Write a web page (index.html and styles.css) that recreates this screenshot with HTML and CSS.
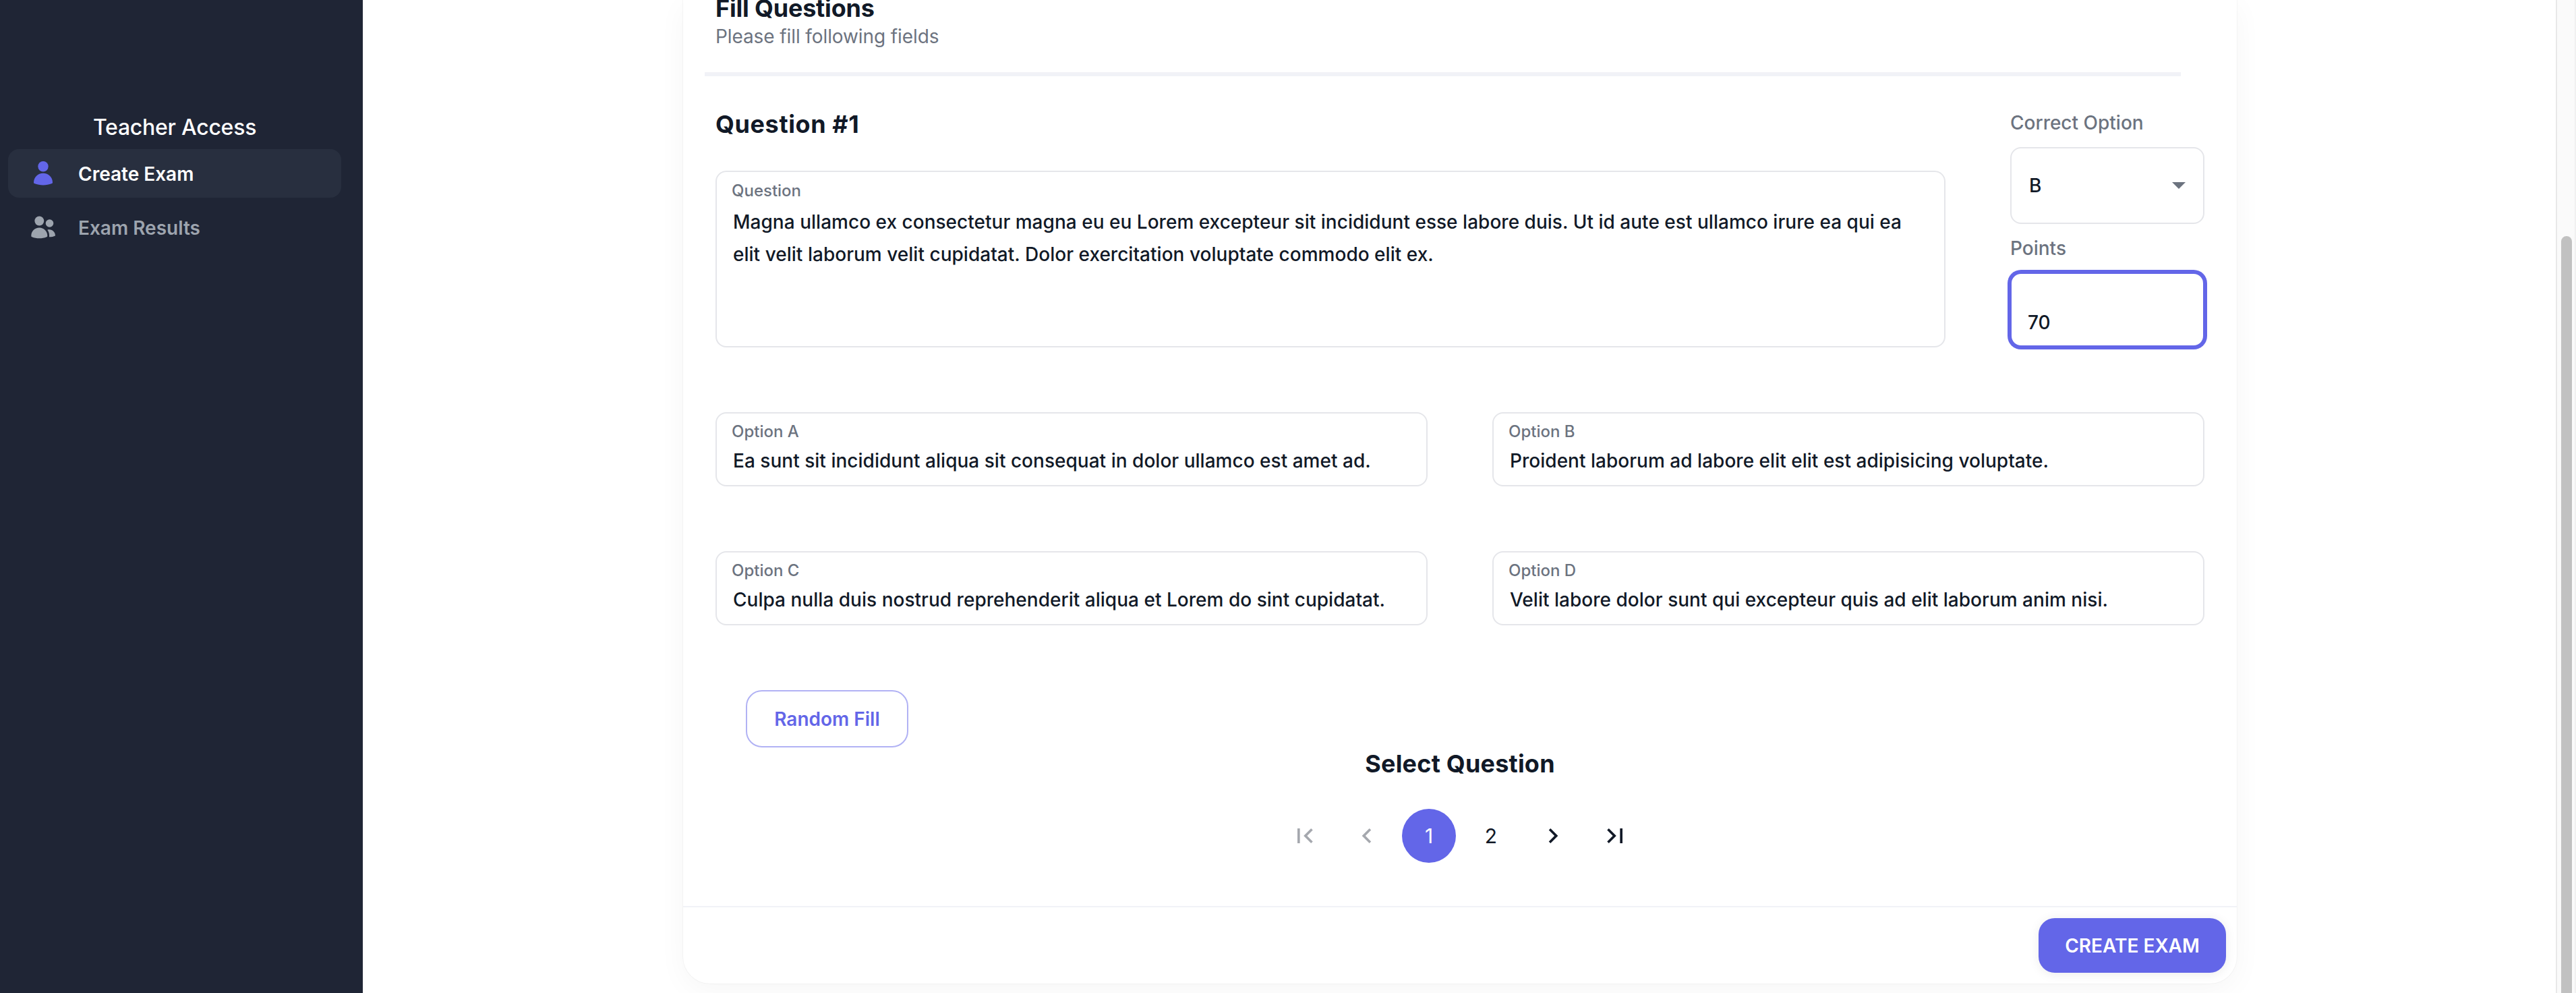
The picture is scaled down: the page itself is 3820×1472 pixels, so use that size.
FILE: index.html
```html
<!DOCTYPE html>
<html lang="en">
<head>
<meta charset="utf-8">
<title>Create Exam</title>
<link rel="stylesheet" href="styles.css">
</head>
<body>
<div class="app">
  <aside class="sidebar">
    <h2 class="sidebar-title">Teacher Access</h2>
    <nav class="nav">
      <a class="nav-item active">
        <svg class="nav-icon" viewBox="0 0 40 40" fill="currentColor"><ellipse cx="20" cy="9.8" rx="7.7" ry="7.8"/><path d="M6 33.6C6 25.7 12.3 19.8 20 19.8s14 5.900 14 13.800c0 .8-.4 1.200-1 1.500-8 3.300-18 3.300-26 0-.6-.3-1-.7-1-1.500Z"/></svg>
        <span class="nav-text">Create Exam</span>
      </a>
      <a class="nav-item">
        <svg class="nav-icon" viewBox="0 0 40 40" fill="currentColor"><circle cx="14.3" cy="10.5" r="6.9"/><circle cx="29.5" cy="14" r="5.8"/><path d="M2.300 32.400c0-6.600 5.300-11.900 12-11.900s12 5.300 12 11.900c0 .9-.3 1.500-1.100 1.900-6.500 2.700-15.300 2.700-21.800 0-.8-.4-1.100-1-1.100-1.900Z"/><path d="M29 34.300c.3-4.400-.4-7.500-2.700-10.500 6-1.900 11.700 2.700 11.700 8.600-2.600 1.300-5.500 1.900-9 1.900Z"/></svg>
        <span class="nav-text">Exam Results</span>
      </a>
    </nav>
  </aside>
  <main class="main">
    <section class="card">
      <header class="card-header">
        <h3 class="heading card-heading">Fill Questions</h3>
        <p class="subheading">Please fill following fields</p>
      </header>
      <hr class="rule">
      <div class="question-row">
        <div class="question-col">
          <h3 class="heading question-heading">Question #1</h3>
          <div class="field question-field">
            <span class="field-label">Question</span>
            <p class="field-text">Magna ullamco ex consectetur magna eu eu Lorem excepteur sit incididunt esse labore duis. Ut id aute est ullamco irure ea qui ea<br>elit velit laborum velit cupidatat. Dolor exercitation voluptate commodo elit ex.</p>
          </div>
        </div>
        <div class="side-col">
          <span class="side-label">Correct Option</span>
          <div class="field select">
            <span>B</span>
            <svg class="caret" viewBox="0 0 20 10"><path d="M0 0h20L10 10Z" fill="#6c737f"/></svg>
          </div>
          <span class="side-label points-label">Points</span>
          <div class="field points">70</div>
        </div>
      </div>
      <div class="options">
        <div class="field option"><span class="field-label">Option A</span><span class="field-text">Ea sunt sit incididunt aliqua sit consequat in dolor ullamco est amet ad.</span></div>
        <div class="field option"><span class="field-label">Option B</span><span class="field-text">Proident laborum ad labore elit elit est adipisicing voluptate.</span></div>
        <div class="field option"><span class="field-label">Option C</span><span class="field-text">Culpa nulla duis nostrud reprehenderit aliqua et Lorem do sint cupidatat.</span></div>
        <div class="field option"><span class="field-label">Option D</span><span class="field-text">Velit labore dolor sunt qui excepteur quis ad elit laborum anim nisi.</span></div>
      </div>
      <button class="btn btn-outline">Random Fill</button>
      <div class="pager">
        <h3 class="heading">Select Question</h3>
        <div class="pages">
          <span class="page disabled"><svg viewBox="0 0 24 24"><path d="M18.410 16.590 13.820 12l4.590-4.590L17 6l-6 6 6 6zM6 6h2v12H6z"/></svg></span>
          <span class="page disabled"><svg viewBox="0 0 24 24"><path d="M15.410 7.410 14 6l-6 6 6 6 1.410-1.410L10.830 12z"/></svg></span>
          <span class="page current">1</span>
          <span class="page">2</span>
          <span class="page"><svg viewBox="0 0 24 24"><path d="M10 6 8.590 7.410 13.170 12l-4.580 4.590L10 18l6-6z"/></svg></span>
          <span class="page"><svg viewBox="0 0 24 24"><path d="M5.590 7.410 10.180 12l-4.590 4.590L7 18l6-6-6-6zM16 6h2v12h-2z"/></svg></span>
        </div>
      </div>
      <footer class="card-footer">
        <button class="btn btn-primary">CREATE EXAM</button>
      </footer>
    </section>
  </main>
  <div class="scrollbar"><div class="thumb"></div></div>
</div>
</body>
</html>
```
FILE: styles.css
```css
* { box-sizing: border-box; margin: 0; }
body { font-family: Inter, "Liberation Sans", sans-serif; font-size: 28px; font-weight: 500; color: #111927; background: #fff; overflow: hidden; }
.app { display: flex; height: 1472px; overflow: hidden; }

.sidebar { width: 538px; flex: none; background: #1f2535; color: #fff; padding: 165px 32px 0 12px; }
.sidebar-title { font-size: 32px; font-weight: 500; line-height: 48px; letter-spacing: -.25px; text-align: center; }
.nav { display: flex; flex-direction: column; gap: 8px; margin-top: 8px; }
.nav-item { display: flex; align-items: center; gap: 32px; height: 72px; padding-left: 32px; border-radius: 16px; font-weight: 600; color: #9da4ae; white-space: nowrap; }
.nav-item.active { background: #282f3f; color: #fff; }
.nav-icon { width: 40px; height: 40px; }
.nav-text { padding-top: 2px; }
.active .nav-icon { color: #6366e8; }

.main { flex: 1; padding-left: 475px; }
.card { width: 2304px; height: 1458px; display: flex; flex-direction: column; background: #fff; border-radius: 0 0 40px 40px; box-shadow: 0 10px 44px rgba(0,0,0,.04), 0 0 0 1px rgba(0,0,0,.03); }
.card-header { height: 107px; flex: none; padding-left: 48px; }
.heading { font-size: 36px; font-weight: 700; line-height: 44px; letter-spacing: .2px; white-space: nowrap; }
.card-heading { margin-top: -10px; letter-spacing: -.2px; }
.subheading { font-weight: 400; line-height: 44px; letter-spacing: -.1px; color: #6c737f; margin-top: -2px; }
.rule { width: 2189px; height: 6px; flex: none; border: 0; margin-left: 32px; background: #f1f2f7; }

.question-row { display: flex; justify-content: space-between; padding: 49px 48px 0; }
.question-col { width: 1824px; }
.question-heading { margin-bottom: 47px; letter-spacing: .6px; }
.field { border: 2px solid #e5e6ea; border-radius: 16px; background: #fff; white-space: nowrap; }
.field-label { display: block; font-size: 24px; line-height: 30px; color: #6c737f; }
.question-field { height: 262px; padding: 13px 22px; }
.field-text { padding-left: 2px; letter-spacing: .02px; }
.question-field .field-text { line-height: 48px; margin-top: 7px; }
.side-col { width: 288px; display: flex; flex-direction: column; }
.side-label { line-height: 40px; color: #6c737f; }
.select { height: 114px; margin-top: 16px; display: flex; align-items: center; justify-content: space-between; padding: 0 26px; }
.caret { width: 20px; height: 10px; }
.points-label { margin-top: 16px; }
.points { height: 110px; margin-top: 16px; padding: 52px 24px 0; line-height: 40px; border-color: #6366e8; box-shadow: 0 0 0 4px #6366e8; }

.options { display: grid; grid-template-columns: 1056px 1056px; column-gap: 96px; row-gap: 96px; padding: 96px 48px 0; }
.option { height: 110px; padding: 12px 22px; }
.option .field-text { display: block; line-height: 40px; margin-top: 8px; }

.btn { font: 600 28px Inter, "Liberation Sans", sans-serif; border-radius: 24px; white-space: nowrap; padding: 0; }
.btn-outline { width: 241px; height: 85px; flex: none; margin: 96px 0 0 93px; color: #6366e8; background: #fff; border: 2px solid #b1b2f4; }
.pager { display: flex; flex-direction: column; align-items: center; margin-top: 2px; }
.pages { display: flex; gap: 12px; margin-top: 45px; }
.page { width: 80px; height: 80px; border-radius: 50%; display: flex; align-items: center; justify-content: center; font-size: 30px; font-weight: 400; }
.page svg { width: 44px; height: 44px; fill: currentColor; }
.current { background: #6366e8; color: #fff; }
.disabled { color: #a5a8ae; }
.card-footer { height: 115px; flex: none; margin-top: auto; border-top: 2px solid #f1f2f7; display: flex; justify-content: flex-end; padding: 16px 16px 0 0; }
.btn-primary { width: 278px; height: 81px; border: 0; color: #fff; background: #6366e8; box-shadow: 0 2px 16px rgba(0,0,0,.08); }

.scrollbar { width: 30px; flex: none; background: #fafafa; border-left: 2px solid #e8e8e8; border-right: 2px solid #f0f0f0; padding: 350px 0 0 6px; overflow: hidden; }
.thumb { width: 16px; height: 1140px; border-radius: 8px; background: #c1c1c1; }
```
